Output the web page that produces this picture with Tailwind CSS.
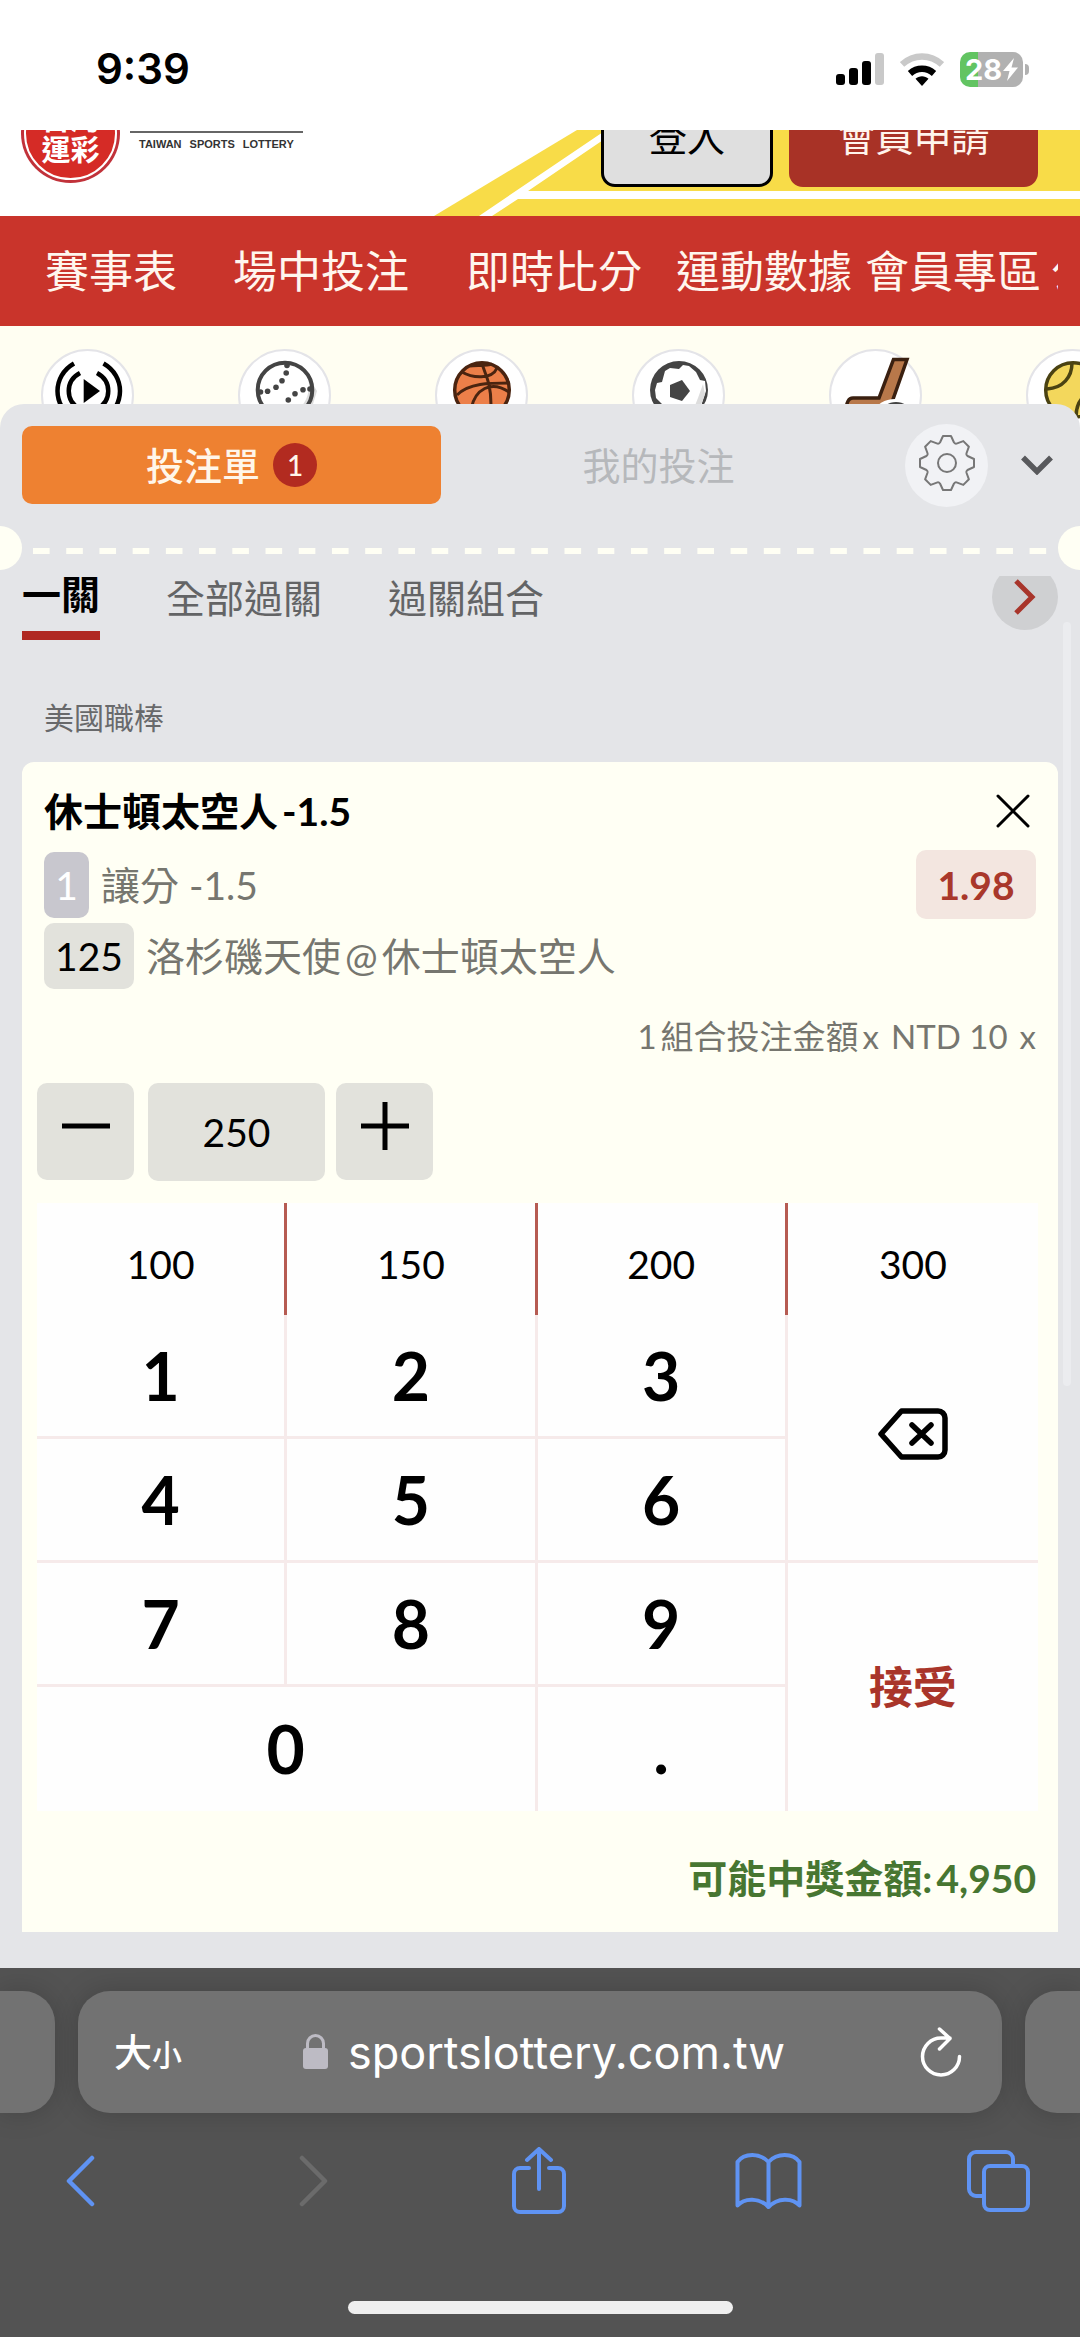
<!DOCTYPE html>
<html lang="zh-Hant">
<head>
<meta charset="utf-8">
<meta name="viewport" content="width=device-width, initial-scale=1">
<title>台灣運彩</title>
<script src="https://cdn.jsdelivr.net/npm/@tailwindcss/browser@4"></script>
</head>
<body class="flex min-h-screen flex-col bg-white font-[Lato,'Noto_Sans_CJK_TC',sans-serif] text-black">

<!-- Status bar -->
<div class="flex h-[130px] items-center justify-between pt-2 pr-[51px] pl-24 font-[Inter,sans-serif]">
  <span class="text-[42px] leading-none font-semibold">9:39</span>
  <div class="flex items-center gap-4">
    <svg class="h-8 w-12" viewBox="0 0 48 32" role="img" aria-label="訊號">
      <rect x="0" y="21" width="9" height="11" rx="3"/><rect x="13" y="15" width="9" height="17" rx="3"/><rect x="26" y="8" width="9" height="24" rx="3"/><rect x="39" y="0" width="9" height="32" rx="3" fill="#c9c9c9"/>
    </svg>
    <svg class="h-[33px] w-11" viewBox="0 0 44 33" role="img" aria-label="Wi-Fi" fill="none" stroke-width="6.5">
      <path d="M2 11.5C13.500 .7 30.500 .7 42 11.500" stroke="#c9c9c9"/>
      <path d="M10 20.500c7-6.200 17-6.200 24 0" stroke="#000"/>
      <path d="M22 33l-6.500-7.200c3.500-3.400 9.500-3.400 13 0z" fill="#000"/>
    </svg>
    <div class="flex items-center gap-[2px]">
      <div class="flex h-[35px] w-[63px] items-center justify-center gap-[1px] rounded-[10px] bg-[linear-gradient(90deg,#62c462_28%,#b1b1b1_28%)] text-[29px] leading-none font-bold text-white">28<svg class="h-[23px] w-[15px]" viewBox="0 0 15 23" fill="#fff"><path d="M11 0L0 13h6.500L4 23 15 9.500H8.500z"/></svg></div>
      <span class="h-[11px] w-1 rounded-r-full bg-[#b1b1b1]"></span>
    </div>
  </div>
</div>

<!-- Site header, scrolled partly under the status bar -->
<header class="relative flex h-[86px] items-end justify-between overflow-hidden pr-[42px] pl-[21px]">
  <svg class="absolute top-0 right-0 h-[86px] w-[646px]" viewBox="0 0 646 86">
    <path d="M0 86L143 0H646V86z" fill="#f8dc48"/>
    <path d="M45 86L175 -2V6L94 61H646V69H84L58 86z" fill="#fff"/>
  </svg>
  <a href="#" class="relative flex items-end gap-[10px] pb-[33px]" aria-label="台灣運彩 Taiwan Sports Lottery">
    <span class="flex size-[99px] flex-col items-center justify-center rounded-full bg-[#c1323a] p-[3px]">
      <span class="flex size-full flex-col items-center justify-center rounded-full border-2 border-white bg-[#d52b26] text-[29px] leading-[31px] font-bold text-white"><span>台灣</span><span>運彩</span></span>
    </span>
    <span class="mb-[32px] flex gap-2 border-t-2 border-[#666] px-[9px] pt-1 font-['Liberation_Sans',sans-serif] text-[11px] leading-[14px] font-bold text-[#333]"><span>TAIWAN</span><span>SPORTS</span><span>LOTTERY</span></span>
  </a>
  <div class="relative flex gap-4 pb-[29px] text-[38px] leading-none">
    <button class="h-[102px] w-[172px] rounded-[14px] border-3 border-black bg-[#dfdfdf]">登入</button>
    <button class="h-[102px] w-[249px] rounded-[14px] bg-[#a83226] text-[#fff4ec]">會員申請</button>
  </div>
</header>

<nav class="h-[110px] bg-[#c9342b] pr-[22px] pl-[45px] text-[44px] leading-[110px] whitespace-nowrap text-[#fff6ee]">
  <div class="flex h-full gap-[13px] overflow-hidden">
    <a href="#" class="mr-[43px] shrink-0">賽事表</a>
    <a href="#" class="mr-11 shrink-0">場中投注</a>
    <a href="#" class="mr-[21px] shrink-0">即時比分</a>
    <a href="#" class="shrink-0">運動數據</a>
    <a href="#" class="mr-[-3px] shrink-0">會員專區</a>
    <a href="#" class="shrink-0">公告</a>
  </div>
</nav>

<!-- Sport picker, its lower part covered by the bet slip -->
<div class="flex h-[106px] gap-[104px] overflow-hidden bg-[#fffef2] pt-[23px] pl-[41px]">
  <a href="#" aria-label="直播" class="size-[93px] shrink-0 rounded-full border-2 border-[#e4e4e8] bg-white"><svg viewBox="2 2 89 89" fill="none" stroke="#000" stroke-width="4.500"><path d="M33 14.500C11 27 11 57 33 70M62.500 14.500C84.500 27 84.500 57 62.500 70M39 24C24 32 24 52 39 60M56 24C71 32 71 52 56 60"/><path d="M42.700 30v24L59 42z" fill="#000" stroke="none"/></svg></a>
  <a href="#" aria-label="棒球" class="size-[93px] shrink-0 rounded-full border-2 border-[#e4e4e8] bg-white"><svg viewBox="2 2 89 89"><circle cx="47" cy="41" r="27" fill="#fff"/><path d="M67 22c10 18 0 36-14 46h18l8-26z" fill="#ddd"/><circle cx="47" cy="41" r="27.300" fill="none" stroke="#444" stroke-width="4"/><g fill="#444"><circle cx="49" cy="16.500" r="2.800"/><circle cx="48.200" cy="24" r="2.800"/><circle cx="44" cy="31.700" r="2.800"/><circle cx="38" cy="38.300" r="2.800"/><circle cx="29.600" cy="42.300" r="2.800"/><circle cx="22.500" cy="43" r="2.800"/><circle cx="72" cy="40" r="2.800"/><circle cx="65" cy="40.700" r="2.800"/><circle cx="57" cy="44.700" r="2.800"/><circle cx="50.300" cy="51" r="2.800"/></g></svg></a>
  <a href="#" aria-label="籃球" class="size-[93px] shrink-0 rounded-full border-2 border-[#e4e4e8] bg-white"><svg viewBox="2 2 89 89" fill="none" stroke="#4a2410" stroke-width="3"><circle cx="47" cy="41" r="27.300" fill="#ec7f49" stroke-width="3.500"/><path d="M47 14c2 10 9 17 9 42M22 46c12-12 32-12 53-12M27 23c10 6 30 8 35-4M36 60c4-20 20-29 38-17M57 15c-5 2-18 1-22 2"/></svg></a>
  <a href="#" aria-label="足球" class="size-[93px] shrink-0 rounded-full border-2 border-[#e4e4e8] bg-white"><svg viewBox="2 2 89 89"><circle cx="47" cy="41" r="29" fill="#444"/><path d="M33 22l5-3 9 1 4-4 6 1 7 6 4 8 5 1 1 10-4 12v14H30V55l-6-6-1-8 2-7 5-1z" fill="#fff"/><path d="M71 35l-5 14-4 10h6l5-14z" fill="#ddd"/><path d="M38 36l12-5 8 11-8 10-12-4z" fill="#444"/></svg></a>
  <a href="#" aria-label="冰球" class="size-[93px] shrink-0 rounded-full border-2 border-[#e4e4e8] bg-white"><svg viewBox="2 2 89 89" class="overflow-visible"><path d="M64.500 10.500H78L62 56l-6 8H17c0-8 2-15 7-15h26z" fill="#b8784a" stroke="#3a2010" stroke-width="3.500"/><ellipse cx="66" cy="62" rx="19" ry="12" fill="#fff"/><ellipse cx="67" cy="63" rx="14" ry="10" fill="#444"/></svg></a>
  <a href="#" aria-label="網球" class="size-[93px] shrink-0 rounded-full border-2 border-[#e4e4e8] bg-white"><svg viewBox="2 2 89 89" fill="none" stroke="#4a4212" stroke-width="3.500"><circle cx="47" cy="41" r="27.300" fill="#f3d75c"/><path d="M46 14c0 14-9 25-25 26M74 42c-13 0-24 8-24 26"/></svg></a>
</div>

<!-- Bet slip sheet -->
<main class="relative z-10 -mt-7 flex-1 rounded-t-3xl bg-[#e4e5e8] pt-[22px] pb-9">
  <div class="flex h-[78px] items-center pr-[27px] pl-[22px] text-[38px] leading-none">
    <button class="flex h-[78px] flex-1 items-center justify-center gap-[13px] rounded-[10px] bg-[#ee8131] font-medium text-[#fff6ea]">投注單<span class="flex size-11 items-center justify-center rounded-full bg-[#b22b20] text-[28px]">1</span></button>
    <button class="h-[78px] flex-1 text-[#b6b8bb]"><span class="pl-4">我的投注</span></button>
    <button aria-label="設定" class="mr-[33px] ml-[45px] flex size-[83px] items-center justify-center rounded-full bg-[#f1f2f5] pb-1"><svg class="size-[58px]" viewBox="-29 -29 58 58" fill="none" stroke="#777" stroke-width="2" stroke-linejoin="round"><path d="M-4-27 L4-27 L7-20.500 Q8.200-19 9.500-19.400 L16.300-21.900 L21.900-16.300 L19.400-9.500 Q19-8.200 20.500-7 L27-4 L27 4 L20.500 7 Q19 8.200 19.400 9.500 L21.900 16.300 L16.300 21.900 L9.500 19.400 Q8.200 19 7 20.500 L4 27 L-4 27 L-7 20.500 Q-8.200 19-9.500 19.400 L-16.300 21.900 L-21.900 16.300 L-19.400 9.500 Q-19 8.200-20.500 7 L-27 4 L-27-4 L-20.500-7 Q-19-8.200-19.400-9.500 L-21.900-16.300 L-16.300-21.900 L-9.500-19.400 Q-8.200-19-7-20.500Z"/><circle r="9"/></svg></button>
    <button aria-label="收合"><svg class="h-5 w-8" viewBox="0 0 32 20" fill="none" stroke="#58595c" stroke-width="5.500"><path d="M2 2.500l14 14 14-14"/></svg></button>
  </div>

  <div class="mt-[22px] flex h-11 items-center">
    <span class="h-11 w-[22px] rounded-r-full bg-[#fffff4]"></span>
    <span class="mt-[6px] -mr-[5px] ml-[11px] h-[6px] flex-1 bg-[linear-gradient(90deg,#fffff4_50%,transparent_50%)] bg-[length:33px_6px] bg-repeat-round"></span>
    <span class="relative h-11 w-[22px] rounded-l-full bg-[#fffff4]"></span>
  </div>

  <div class="relative mt-[6px] overflow-hidden">
    <div class="flex h-16 items-start justify-between px-[22px]">
      <div class="flex gap-[66px] text-[39px] leading-[44px] text-[#636466]">
        <button class="-mt-1 flex h-[68px] items-start border-b-[9px] border-[#b02822] font-bold text-black">一關</button>
        <button class="h-11">全部過關</button>
        <button class="h-11">過關組合</button>
      </div>
      <button aria-label="下一頁" class="-mt-3 flex size-[66px] items-center justify-center rounded-full bg-[#cfd0d2]"><svg class="h-9 w-6" viewBox="0 0 24 36" fill="none" stroke="#a8352b" stroke-width="5"><path d="M3 2l16 16L3 34"/></svg></button>
    </div>
    <h2 class="mt-[57px] px-11 text-[30px] leading-10 text-[#68696b]">美國職棒</h2>

    <section class="mx-[22px] mt-[25px] rounded-t-xl bg-[#fffff4] pt-[23px] pb-7">
      <div class="px-[22px] text-[39px] leading-[52px]">
        <div class="flex items-center justify-between">
          <h3 class="flex gap-1 font-bold"><span>休士頓太空人</span> <span>-1.5</span></h3>
          <button aria-label="移除" class="mr-[5px]"><svg class="size-9" viewBox="0 0 36 36" stroke="#000" stroke-width="3" stroke-linecap="round"><path d="M3 3l30 30M33 3L3 33"/></svg></button>
        </div>
        <div class="mt-[13px] flex h-[69px] items-center gap-3">
          <span class="flex h-[66px] w-[45px] items-center justify-center rounded-[10px] bg-[#c8c7ce] text-white">1</span>
          <span class="flex-1 text-[#76766f]">讓分 -1.5</span>
          <span class="flex h-[69px] w-[120px] items-center justify-center rounded-[10px] bg-[#f3e6e0] font-bold text-[#a9382b]">1.98</span>
        </div>
        <div class="mt-1 flex items-center gap-3">
          <span class="flex h-[66px] w-[90px] items-center justify-center rounded-[10px] bg-[#e2e2dc]">125</span>
          <span class="flex gap-1 text-[#76766f]"><span>洛杉磯天使</span> <span>@</span> <span>休士頓太空人</span></span>
        </div>
        <p class="mt-[25px] flex justify-end gap-3 text-[33px] leading-[44px] text-[#76766f]"><span class="flex gap-1"><span>1</span> <span>組合投注金額</span> <span>x</span></span> <span>NTD 10</span> <span>x</span></p>
      </div>

      <div class="mt-[25px] flex pl-[15px]">
        <button aria-label="減少" class="mr-[14px] flex h-[97px] w-[97px] justify-center rounded-[10px] bg-[#e2e2dc] pt-[18px]"><svg class="h-[50px] w-[50px]" viewBox="0 0 50 50" stroke="#000" stroke-width="5"><path d="M1 25h48"/></svg></button>
        <input aria-label="投注倍數" value="250" class="mr-[11px] h-[98px] w-[177px] rounded-[10px] bg-[#e2e2dc] text-center text-[39px]">
        <button aria-label="增加" class="flex h-[97px] w-[97px] justify-center rounded-[10px] bg-[#e2e2dc] pt-[18px]"><svg class="h-[50px] w-[50px]" viewBox="0 0 50 50" stroke="#000" stroke-width="5"><path d="M1 25h48M25 1v48"/></svg></button>
      </div>

      <div class="mt-[22px] mr-5 ml-[15px] bg-[#fefefe]">
        <div class="grid h-28 grid-cols-4 text-[39px]">
          <button class="border-r-3 border-[#b65b52] pt-[10px]">100</button>
          <button class="border-r-3 border-[#b65b52] pt-[10px]">150</button>
          <button class="border-r-3 border-[#b65b52] pt-[10px]">200</button>
          <button class="pt-[10px]">300</button>
        </div>
        <div class="grid h-[496px] grid-cols-4 grid-rows-4 text-[66px] leading-none font-bold">
          <button class="border-r-3 border-b-3 border-[#f6eaea]">1</button>
          <button class="border-r-3 border-b-3 border-[#f6eaea]">2</button>
          <button class="border-r-3 border-b-3 border-[#f6eaea]">3</button>
          <button aria-label="刪除" class="row-span-2 flex items-center justify-center border-b-3 border-[#f6eaea] pb-2"><svg class="h-[52px] w-[70px]" viewBox="0 0 70 52" fill="none" stroke="#000" stroke-width="5.500" stroke-linejoin="round" stroke-linecap="round"><path d="M23.500 3H60a7 7 0 0 1 7 7v32a7 7 0 0 1-7 7H23.500L3 26z"/><path d="M34 17l19 18M53 17L34 35"/></svg></button>
          <button class="border-r-3 border-b-3 border-[#f6eaea]">4</button>
          <button class="border-r-3 border-b-3 border-[#f6eaea]">5</button>
          <button class="border-r-3 border-b-3 border-[#f6eaea]">6</button>
          <button class="border-r-3 border-b-3 border-[#f6eaea]">7</button>
          <button class="border-r-3 border-b-3 border-[#f6eaea]">8</button>
          <button class="border-r-3 border-b-3 border-[#f6eaea]">9</button>
          <button class="row-span-2 text-[44px] text-[#a9352a]">接受</button>
          <button class="col-span-2 border-r-3 border-[#f6eaea]">0</button>
          <button class="border-r-3 border-[#f6eaea]">.</button>
        </div>
      </div>
      <p class="mt-[41px] flex justify-end gap-1 px-[22px] text-[39px] leading-[52px] font-bold text-[#477631]"><span>可能中獎金額:</span> <span>4,950</span></p>
    </section>
    <span class="absolute top-[46px] right-[9px] h-[764px] w-2 rounded-full bg-[#ebecef]"></span>
  </div>
</main>

<!-- Browser toolbar -->
<footer class="bg-[#535353] pt-[23px] pb-[23px]">
  <div class="flex h-[122px] gap-[23px]">
    <span class="w-[55px] rounded-r-[32px] bg-[#727272] shadow-[0_0_28px_rgba(0,0,0,0.18)]"></span>
    <div class="flex flex-1 items-center justify-between rounded-[32px] bg-[#727272] pr-10 pl-9 font-[Inter,'Noto_Sans_CJK_TC',sans-serif] text-white shadow-[0_0_28px_rgba(0,0,0,0.18)]">
      <button aria-label="文字大小" class="flex items-baseline text-[38px] leading-none font-medium">大<span class="text-[30px]">小</span></button>
      <button class="flex items-center gap-5 text-[45px] leading-none"><svg class="h-9 w-[25px]" viewBox="0 0 25 36" fill="#bdbbc4"><rect y="14" width="25" height="21" rx="3"/><path d="M4.500 16V9.500a8 8 0 0 1 16 0V16" fill="none" stroke="#bdbbc4" stroke-width="3"/></svg>sportslottery.com.tw</button>
      <button aria-label="重新載入" class="flex w-14 justify-end"><svg class="h-[51px] w-[42px]" viewBox="0 0 42 51" fill="none" stroke="#fff" stroke-width="3.500" stroke-linecap="round" stroke-linejoin="round"><path d="M39.500 29.500A18.500 18.500 0 1 1 21 11h9M19.500 2L30 11.500 19.500 22"/></svg></button>
    </div>
    <span class="w-[55px] rounded-l-[32px] bg-[#727272] shadow-[0_0_28px_rgba(0,0,0,0.18)]"></span>
  </div>
  <div class="mt-[34px] flex h-[68px] items-center justify-between pr-[29px] pl-[27px] text-[#5f93f3]">
    <button aria-label="上一頁" class="flex w-[106px] justify-center"><svg class="h-[52px] w-[30px]" viewBox="0 0 30 52" fill="none" stroke="currentColor" stroke-width="4.500" stroke-linecap="round" stroke-linejoin="round"><path d="M27 3L4 26l23 23"/></svg></button>
    <button aria-label="下一頁" disabled class="flex w-[106px] justify-center pl-2 text-[#6b6b6b]"><svg class="h-[52px] w-[30px]" viewBox="0 0 30 52" fill="none" stroke="currentColor" stroke-width="4.500" stroke-linecap="round" stroke-linejoin="round"><path d="M3 3l23 23L3 49"/></svg></button>
    <button aria-label="分享" class="flex w-[106px] justify-center"><svg class="h-[68px] w-[54px]" viewBox="0 0 54 68" fill="none" stroke="currentColor" stroke-width="4" stroke-linecap="round"><path d="M17 21H8a6 6 0 0 0-6 6v32a6 6 0 0 0 6 6h38a6 6 0 0 0 6-6V27a6 6 0 0 0-6-6h-9M27 42V3M15 13L27 2l12 11"/></svg></button>
    <button aria-label="書籤" class="flex w-[106px] justify-center"><svg class="h-14 w-[67px]" viewBox="0 0 67 56" fill="none" stroke="currentColor" stroke-width="4" stroke-linecap="round" stroke-linejoin="round"><path d="M33.500 9C25-.3 9-.3 2.500 9v43.500c7-8 22-8 31 1.500 9-9.500 24-9.500 31-1.500V9C58-.3 42-.3 33.500 9zV54"/></svg></button>
    <button aria-label="分頁" class="flex w-[106px] justify-center"><svg class="h-[62px] w-[63px]" viewBox="0 0 63 62" fill="none" stroke="currentColor" stroke-width="4"><rect x="17" y="16" width="44" height="44" rx="6"/><path d="M17 46H9a7 7 0 0 1-7-7V9a7 7 0 0 1 7-7h30a7 7 0 0 1 7 7v7"/></svg></button>
  </div>
  <div class="mx-auto mt-[86px] h-[13px] w-[385px] rounded-full bg-[#efefef]"></div>
</footer>
</body>
</html>
